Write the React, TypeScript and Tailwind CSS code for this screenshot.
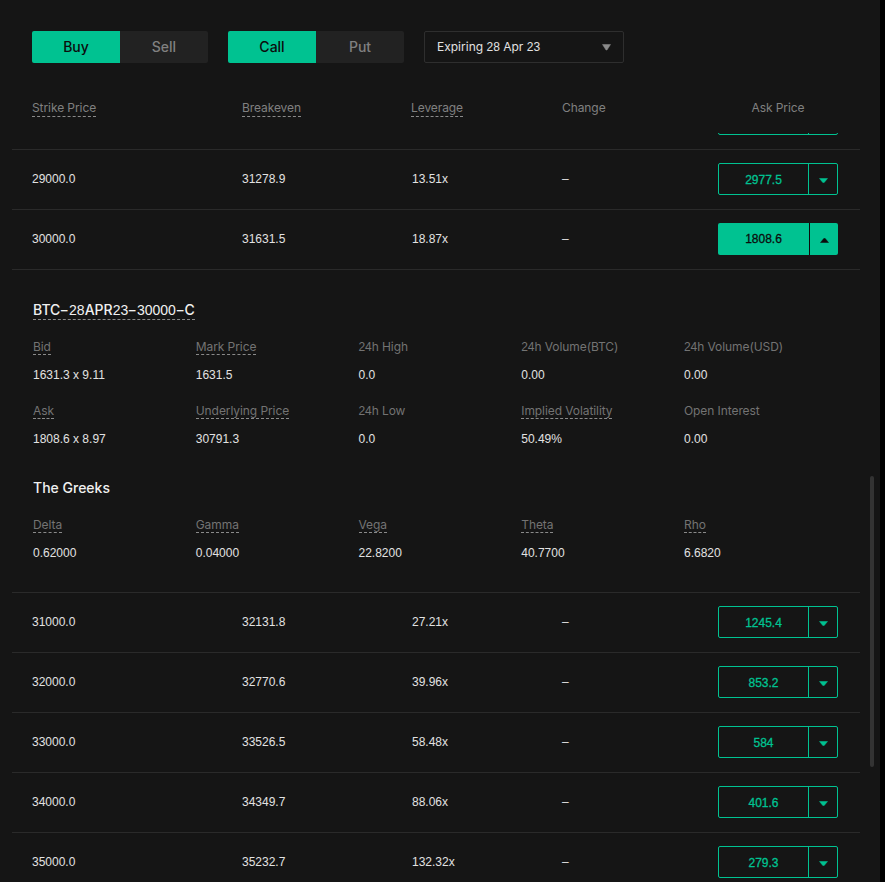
const font = "font-['Inter',sans-serif]";
const numFont = "font-['Liberation_Sans',sans-serif]";

const rowsBelow = [
  { strike: "31000.0", even: "32131.8", lev: "27.21x", ask: "1245.4" },
  { strike: "32000.0", even: "32770.6", lev: "39.96x", ask: "853.2" },
  { strike: "33000.0", even: "33526.5", lev: "58.48x", ask: "584" },
  { strike: "34000.0", even: "34349.7", lev: "88.06x", ask: "401.6" },
  { strike: "35000.0", even: "35232.7", lev: "132.32x", ask: "279.3" },
];

const stats = [
  { label: "Bid", value: "1631.3 x 9.11", dashed: true },
  { label: "Mark Price", value: "1631.5", dashed: true },
  { label: "24h High", value: "0.0" },
  { label: "24h Volume(BTC)", value: "0.00" },
  { label: "24h Volume(USD)", value: "0.00" },
  { label: "Ask", value: "1808.6 x 8.97", dashed: true },
  { label: "Underlying Price", value: "30791.3", dashed: true },
  { label: "24h Low", value: "0.0" },
  { label: "Implied Volatility", value: "50.49%", dashed: true },
  { label: "Open Interest", value: "0.00" },
];

const greeks = [
  { label: "Delta", value: "0.62000", dashed: true },
  { label: "Gamma", value: "0.04000", dashed: true },
  { label: "Vega", value: "22.8200", dashed: true },
  { label: "Theta", value: "40.7700", dashed: true },
  { label: "Rho", value: "6.6820", dashed: true },
];

// digits come out of a narrower face than the letters
function Mixed({ text }: { text: string }) {
  return (
    <>
      {text.split(/(\d+|-)/).map((part, i) =>
        part === "-" ? (
          <span key={i} className="mx-[1.1px] inline-block scale-x-[1.45]">
            -
          </span>
        ) : /^\d+$/.test(part) ? (
          <span key={i} className={numFont}>
            {part}
          </span>
        ) : (
          part
        )
      )}
    </>
  );
}

function Caret({ up, className }: { up?: boolean; className?: string }) {
  return (
    <svg width="9" height="5" viewBox="0 0 9 5" className={className}>
      <path
        d={up ? "M3.8 .5H5.2L8.5 4.5H.5Z" : "M.5 .5H8.5L5.2 4.5H3.8Z"}
        fill="currentColor"
        stroke="currentColor"
        strokeWidth=".5"
        strokeLinejoin="round"
      />
    </svg>
  );
}

function Toggle({ on, off }: { on: string; off: string }) {
  return (
    <div className="flex h-8 w-[176px] overflow-hidden rounded-[2px] text-sm font-medium">
      <div className="flex w-[88px] items-center justify-center bg-[#00c291] text-[#0c0c0c]">{on}</div>
      <div className="flex w-[88px] items-center justify-center bg-[#222222] text-[#808080]">{off}</div>
    </div>
  );
}

function AskButton({ ask, active }: { ask: string; active?: boolean }) {
  if (active) {
    return (
      <div className={`${numFont} ml-auto flex h-8 w-[120px] overflow-hidden rounded-[2px] bg-[#00c291] text-xs text-[#0c0c0c] [-webkit-text-stroke:0.3px]`}>
        <div className="flex w-[92px] items-center justify-center border-r border-[#0c0c0c]">{ask}</div>
        <div className="flex flex-1 items-center justify-center">
          <Caret up className="mt-[2px] text-[#0c0c0c]" />
        </div>
      </div>
    );
  }
  return (
    <div className={`${numFont} ml-auto flex h-8 w-[120px] rounded-[2px] border border-[#00c291] text-xs text-[#00c291] [-webkit-text-stroke:0.3px]`}>
      <div className="flex w-[90px] items-center justify-center border-r border-[#00c291] pt-px">{ask}</div>
      <div className="flex flex-1 items-center justify-center">
        <Caret className="mt-[3px]" />
      </div>
    </div>
  );
}

function Row({ strike, even, lev, ask, active }: { strike: string; even: string; lev: string; ask: string; active?: boolean }) {
  return (
    <div className={`${numFont} grid h-[60px] grid-cols-[210px_170px_150px_1fr] items-center border-b border-[#2a2a2a] pb-px pl-5 pr-[22px] text-xs text-[#e2e2e2]`}>
      <div>{strike}</div>
      <div>{even}</div>
      <div>{lev}</div>
      <div className="flex items-center">
        <span>–</span>
        <AskButton ask={ask} active={active} />
      </div>
    </div>
  );
}

function Stat({ label, value, dashed }: { label: string; value: string; dashed?: boolean }) {
  return (
    <div className="flex h-16 flex-col">
      <div className="h-[18px] leading-4 tracking-[-0.08px] text-[#737373]">
        <span className={dashed ? "inline-block border-b border-dashed border-[#8a8a8a] leading-[15px]" : "inline-block leading-[15px]"}>
          <Mixed text={label} />
        </span>
      </div>
      <div className={`${numFont} mt-[10px] leading-4 text-[#e2e2e2]`}>{value}</div>
    </div>
  );
}

export default function App() {
  return (
    <div className={`${font} relative flex h-[882px] w-[885px] overflow-hidden bg-black`}>
      <div className="flex h-full w-[880px] flex-col bg-[#151515]">
        {/* Filters */}
        <div className="flex gap-5 pl-8 pt-[31px]">
          <Toggle on="Buy" off="Sell" />
          <Toggle on="Call" off="Put" />
          <div className="flex h-8 w-[200px] items-center justify-between rounded-[2px] border border-[#2e2e2e] pl-3 pr-[12px] text-xs text-[#e2e2e2]">
            <span>
              <Mixed text="Expiring 28 Apr 23" />
            </span>
            <svg width="9" height="7" viewBox="0 0 9 7" className="text-[#8a8a8a]">
              <path d="M.5 .5H8.5L5 6H4Z" fill="currentColor" stroke="currentColor" strokeWidth=".5" strokeLinejoin="round" />
            </svg>
          </div>
        </div>

        {/* Table header */}
        <div className="mt-[37px] grid h-[33px] grid-cols-[210px_170px_150px_1fr] items-start pl-8 pr-[42px] text-xs leading-4 tracking-[-0.08px] text-[#808080]">
          <div><span className="inline-block border-b border-dashed border-[#8a8a8a]">Strike Price</span></div>
          <div><span className="inline-block border-b border-dashed border-[#8a8a8a]">Breakeven</span></div>
          <div><span className="-ml-px inline-block border-b border-dashed border-[#8a8a8a]">Leverage</span></div>
          <div className="flex">
            <span>Change</span>
            <span className="ml-auto w-[120px] text-center">Ask Price</span>
          </div>
        </div>

        {/* Rows, scrolled so the one above is cut off */}
        <div className="ml-3 w-[848px] flex-1 overflow-hidden">
          <div className="-mt-[46px] h-[63px] border-b border-[#2a2a2a] pr-[22px] pt-[16px]">
            <div className="ml-auto h-8 w-[120px] rounded-[2px] border border-[#00c291]">
              <div className="h-full w-[90px] border-r border-[#00c291]" />
            </div>
          </div>
          <Row strike="29000.0" even="31278.9" lev="13.51x" ask="2977.5" />
          <Row strike="30000.0" even="31631.5" lev="18.87x" ask="1808.6" active />

          {/* Expanded instrument */}
          <div className="h-[323px] border-b border-[#2a2a2a] pl-[21px] pt-[31px] text-xs">
            <div className="h-[26px]">
              <span className="inline-block border-b border-dashed border-[#8a8a8a] text-sm font-medium leading-[17px] text-[#f0f0f0]">
                <Mixed text="BTC-28APR23-30000-C" />
              </span>
            </div>
            <div className="mt-[12px] grid grid-cols-[162.75px_162.75px_162.75px_162.75px_1fr]">
              {stats.map((s) => (
                <Stat key={s.label} {...s} />
              ))}
            </div>
            <div className="mt-[12px] h-[29px] text-sm font-medium leading-[17px] text-[#f0f0f0]">The Greeks</div>
            <div className="mt-[9px] grid grid-cols-[162.75px_162.75px_162.75px_162.75px_1fr]">
              {greeks.map((s) => (
                <Stat key={s.label} {...s} />
              ))}
            </div>
          </div>

          {rowsBelow.map((r) => (
            <Row key={r.strike} {...r} />
          ))}
        </div>
      </div>

      {/* Scrollbar thumb */}
      <div className="absolute left-[870px] top-[476px] h-[291px] w-1 rounded-full bg-[#333333]" />
    </div>
  );
}
